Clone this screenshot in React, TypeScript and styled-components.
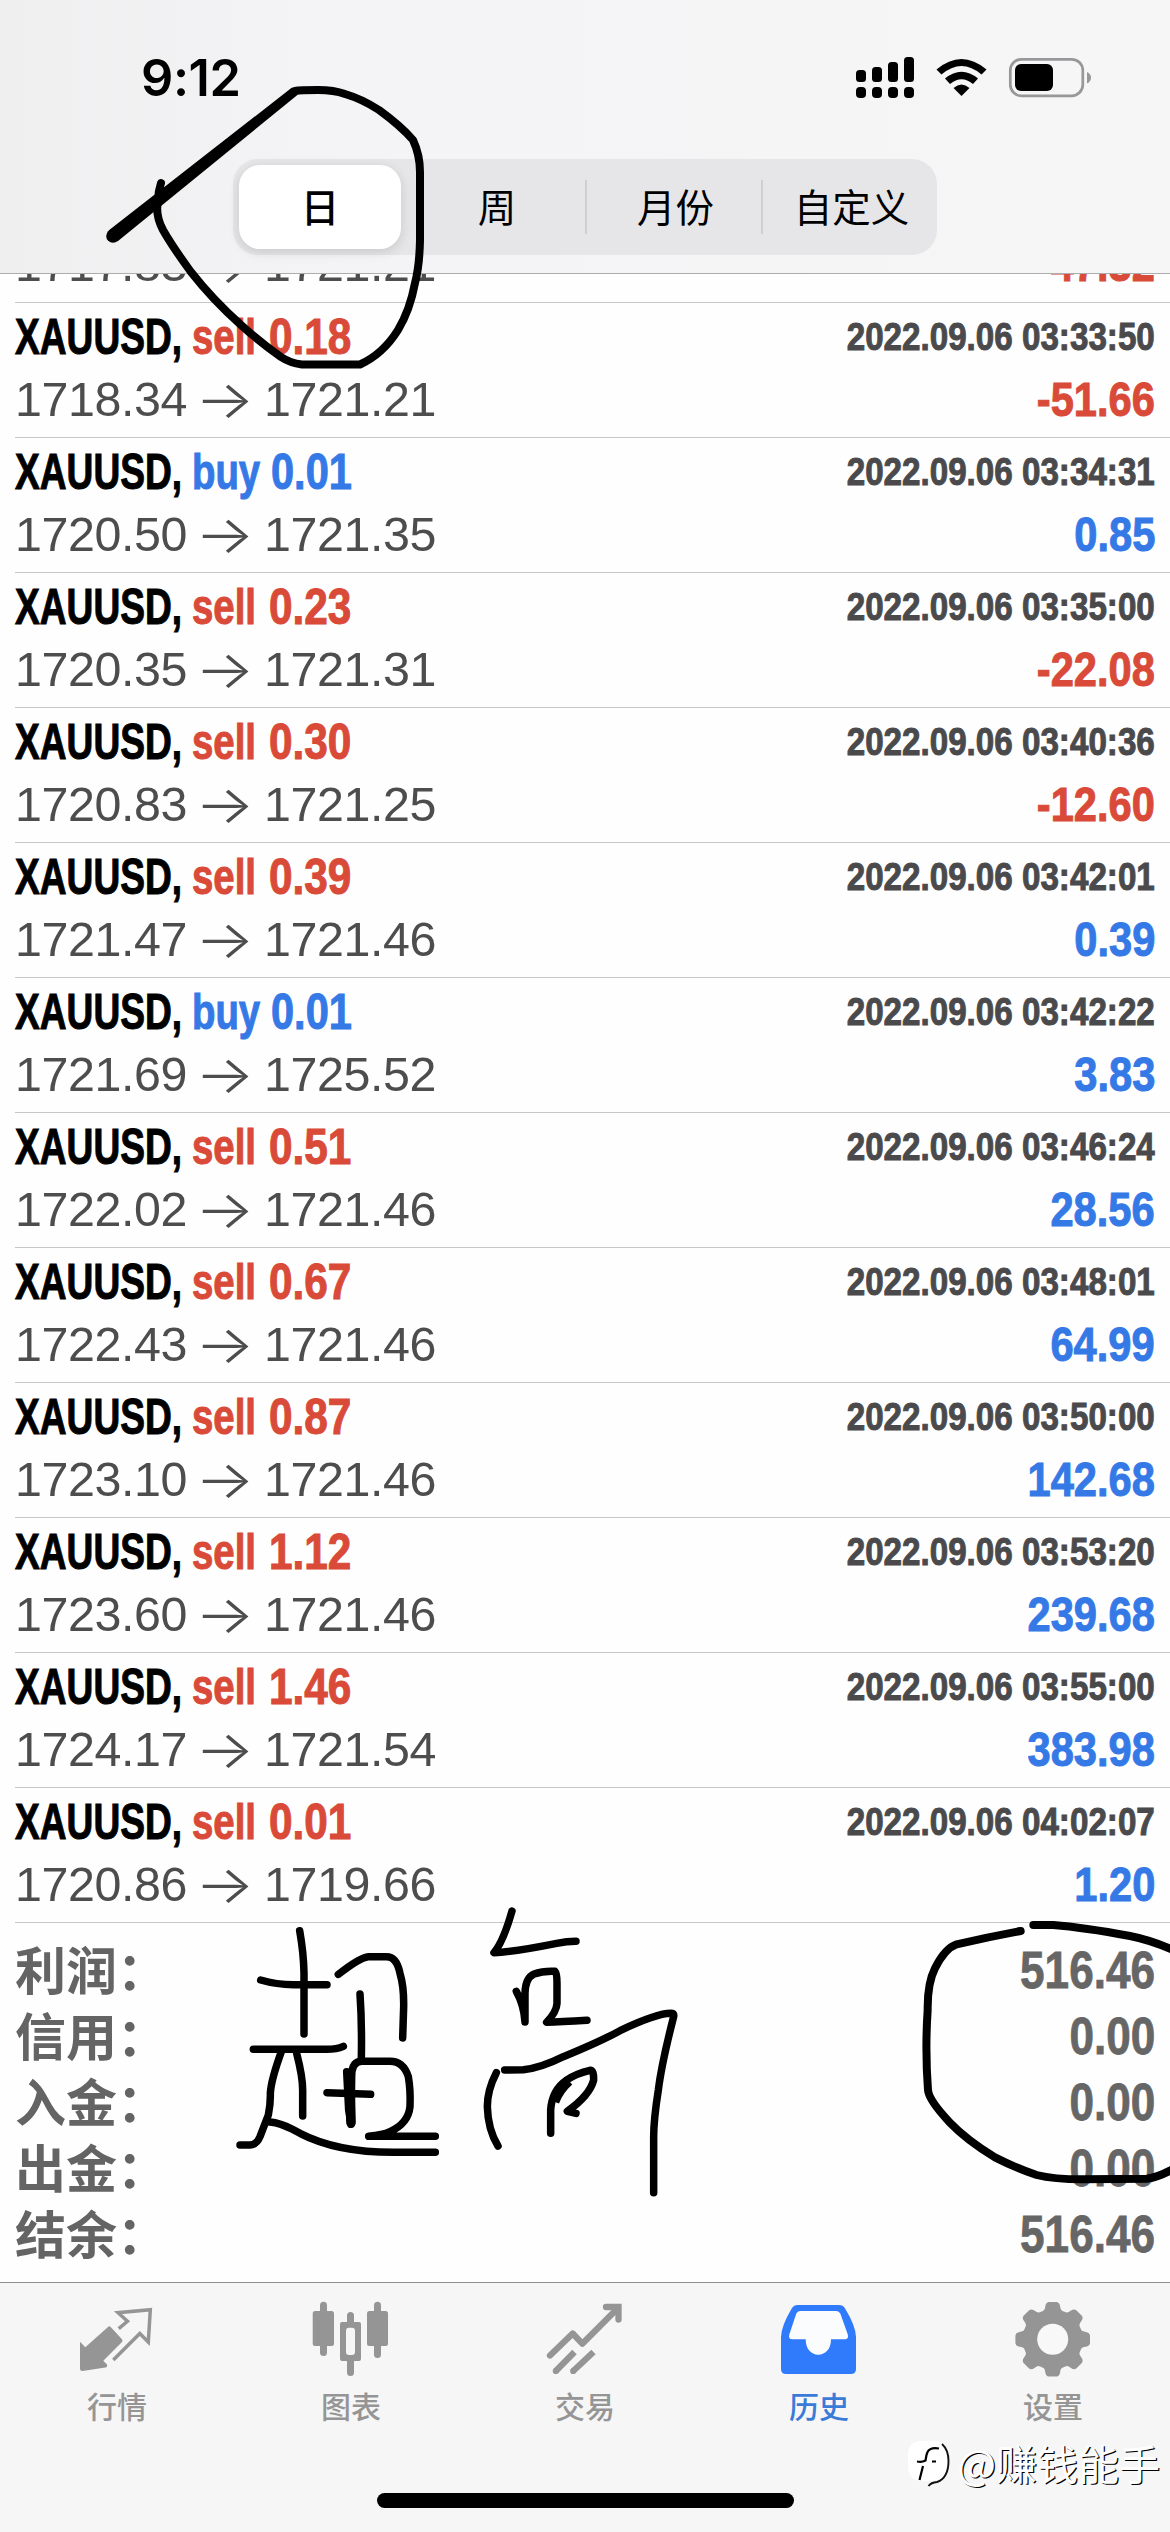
import React from "react";
import styled, { createGlobalStyle } from "styled-components";

const RED = "#d94a38";
const BLUE = "#3579e6";

const GlobalStyle = createGlobalStyle`
  * { box-sizing: border-box; }
  html, body { margin: 0; padding: 0; background: #fff; }
  body { font-family: "Liberation Sans", "Noto Sans CJK SC", sans-serif; }
`;

const Screen = styled.div`
  position: relative;
  display: flex;
  flex-direction: column;
  width: 1170px;
  height: 2532px;
  overflow: hidden;
  background: #fefefe;
`;

const Header = styled.header`
  flex: none;
  height: 274px;
  border-bottom: 1px solid #adadaf;
  background: linear-gradient(90deg, #efeff0 0%, #f4f4f6 30%, #f6f6f6 100%);
`;

const StatusBar = styled.div`
  display: flex;
  align-items: center;
  justify-content: space-between;
  height: 156px;
  margin-bottom: 3px;
  padding: 0 78px 0 141px;
`;

const Clock = styled.time`
  font-family: Inter, sans-serif;
  font-size: 50.5px;
  font-weight: 600;
  line-height: 60px;
  letter-spacing: -0.4px;
  color: #000;
`;

const StatusIcons = styled.svg`
  display: block;
  width: 236px;
  height: 44px;
`;

const Segmented = styled.nav`
  display: grid;
  grid-template-columns: repeat(4, 1fr);
  width: 704px;
  height: 96px;
  margin: 0 auto;
  padding: 6px 0;
  border-radius: 25px;
  background: #e6e6e8;
`;

const Segment = styled.button<{ $active?: boolean; $divider?: boolean }>`
  position: relative;
  display: flex;
  align-items: center;
  justify-content: center;
  margin: ${(p) => (p.$active ? "0 8px 0 6px" : "0")};
  padding: ${(p) => (p.$divider ? "0 0 5px 5px" : "0 0 5px")};
  border: 0;
  border-radius: 21px;
  background: ${(p) => (p.$active ? "#fff" : "transparent")};
  box-shadow: ${(p) => (p.$active ? "0 3px 12px rgba(0,0,0,.13)" : "none")};
  color: #000;
  font-family: "Noto Sans CJK SC", sans-serif;
  font-size: 38.5px;
  font-weight: ${(p) => (p.$active ? 500 : 400)};
  line-height: 56px;
  &::before {
    content: "";
    display: ${(p) => (p.$divider ? "block" : "none")};
    position: absolute;
    left: 0;
    top: 15px;
    width: 2px;
    height: 54px;
    background: #cfcfd1;
  }
`;

const History = styled.main`
  flex: none;
  height: 1649px;
  overflow: hidden;
  background: #fefefe;
`;

const Deals = styled.ul`
  margin: -41px 0 0 15px;
  padding: 0;
  list-style: none;
`;

const Deal = styled.li<{ $partial?: boolean }>`
  height: ${(p) => (p.$partial ? 70 : 135)}px;
  padding: ${(p) => (p.$partial ? 0 : 2)}px 15px 0 0;
  border-bottom: 1px solid #c6c8c8;
`;

const Line = styled.div`
  display: flex;
  height: 63px;
  line-height: 63px;
  white-space: pre;
`;

const Condensed = styled.span<{ $size: number; $scale: number; $width?: number; $color: string; $right?: boolean }>`
  display: block;
  flex: none;
  width: ${(p) => (p.$width ? `${p.$width}px` : "auto")};
  margin-left: ${(p) => (p.$right ? "auto" : "0")};
  transform: scaleX(${(p) => p.$scale});
  transform-origin: ${(p) => (p.$right ? "right" : "left")} center;
  font-size: ${(p) => p.$size}px;
  font-weight: 700;
  color: ${(p) => p.$color};
  -webkit-text-stroke: 1px ${(p) => p.$color};
`;

const Price = styled.span<{ $width: number }>`
  flex: none;
  width: ${(p) => p.$width}px;
  font-size: 48.4px;
  letter-spacing: -0.4px;
  color: #4d4d4d;
`;

const Arrow = styled.span`
  flex: none;
  width: 69px;
  transform: scaleX(1.2);
  transform-origin: left center;
  font-family: Inter, sans-serif;
  font-size: 52px;
  font-weight: 300;
  color: #4d4d4d;
`;

const Summary = styled.dl`
  display: flex;
  flex: none;
  flex-direction: column;
  height: 359px;
  margin: 0;
  padding: 15px 15px 0;
`;

const Total = styled.div`
  display: flex;
  align-items: center;
  height: 66px;
  line-height: 66px;
`;

const TotalLabel = styled.dt`
  margin-top: -7px;
  font-family: "Noto Sans CJK SC", sans-serif;
  font-size: 51px;
  font-weight: 600;
  color: #646464;
`;

const TotalValue = styled.dd`
  margin: 0 0 0 auto;
  transform: scaleX(0.865);
  transform-origin: right center;
  font-size: 51px;
  font-weight: 700;
  color: #666;
  -webkit-text-stroke: 0.8px #666;
`;

const TabBar = styled.footer`
  flex: none;
  height: 250px;
  border-top: 1px solid #8e8e8e;
  background: #f6f6f6;
`;

const Tabs = styled.nav`
  display: grid;
  grid-template-columns: repeat(5, 1fr);
  height: 210px;
  padding-top: 17px;
`;

const Tab = styled.a<{ $active?: boolean }>`
  display: flex;
  flex-direction: column;
  align-items: center;
  color: ${(p) => (p.$active ? "#2f7bfb" : "#959595")};
`;

const TabIcon = styled.svg`
  display: block;
  width: 80px;
  height: 80px;
  overflow: visible;
`;

const TabLabel = styled.span<{ $active?: boolean }>`
  margin-top: 5px;
  color: ${(p) => (p.$active ? "#3a7bd8" : "#959595")};
  font-family: "Noto Sans CJK SC", sans-serif;
  font-size: 30px;
  font-weight: 500;
  line-height: 40px;
`;

const HomeIndicator = styled.div`
  width: 417px;
  height: 15px;
  margin: 0 auto;
  border-radius: 8px;
  background: #000;
`;

const Watermark = styled.div`
  position: absolute;
  right: 10px;
  bottom: 41px;
  display: flex;
  align-items: center;
  gap: 5px;
  color: #fff;
  font-family: "Noto Sans CJK SC", sans-serif;
  font-size: 41px;
  line-height: 58px;
  text-shadow: 1.3px 1.3px 0 #000;
`;

const WatermarkLogo = styled.svg`
  display: block;
  width: 46px;
  height: 50px;
  margin-top: 3px;
`;

const Ink = styled.svg`
  position: absolute;
  inset: 0;
  width: 1170px;
  height: 2532px;
  pointer-events: none;
`;

interface DealData {
  side: "buy" | "sell";
  volume: string;
  open: string;
  close: string;
  time: string;
  profit: string;
}

const scrolledDeal = { open: "1717.83", close: "1721.21", profit: "-47.32" };

const deals: DealData[] = [
  { side: "sell", volume: "0.18", open: "1718.34", close: "1721.21", time: "2022.09.06 03:33:50", profit: "-51.66" },
  { side: "buy", volume: "0.01", open: "1720.50", close: "1721.35", time: "2022.09.06 03:34:31", profit: "0.85" },
  { side: "sell", volume: "0.23", open: "1720.35", close: "1721.31", time: "2022.09.06 03:35:00", profit: "-22.08" },
  { side: "sell", volume: "0.30", open: "1720.83", close: "1721.25", time: "2022.09.06 03:40:36", profit: "-12.60" },
  { side: "sell", volume: "0.39", open: "1721.47", close: "1721.46", time: "2022.09.06 03:42:01", profit: "0.39" },
  { side: "buy", volume: "0.01", open: "1721.69", close: "1725.52", time: "2022.09.06 03:42:22", profit: "3.83" },
  { side: "sell", volume: "0.51", open: "1722.02", close: "1721.46", time: "2022.09.06 03:46:24", profit: "28.56" },
  { side: "sell", volume: "0.67", open: "1722.43", close: "1721.46", time: "2022.09.06 03:48:01", profit: "64.99" },
  { side: "sell", volume: "0.87", open: "1723.10", close: "1721.46", time: "2022.09.06 03:50:00", profit: "142.68" },
  { side: "sell", volume: "1.12", open: "1723.60", close: "1721.46", time: "2022.09.06 03:53:20", profit: "239.68" },
  { side: "sell", volume: "1.46", open: "1724.17", close: "1721.54", time: "2022.09.06 03:55:00", profit: "383.98" },
  { side: "sell", volume: "0.01", open: "1720.86", close: "1719.66", time: "2022.09.06 04:02:07", profit: "1.20" },
];

const totals: [string, string][] = [
  ["利润：", "516.46"],
  ["信用：", "0.00"],
  ["入金：", "0.00"],
  ["出金：", "0.00"],
  ["结余：", "516.46"],
];

function PriceLine({ open, close, profit }: { open: string; close: string; profit: string }) {
  return (
    <Line>
      <Price $width={180}>{open}</Price>
      <Arrow>→</Arrow>
      <Price $width={180}>{close}</Price>
      <Condensed $size={49} $scale={0.85} $color={profit.startsWith("-") ? RED : BLUE} $right>
        {profit}
      </Condensed>
    </Line>
  );
}

function DealRow({ deal }: { deal: DealData }) {
  const sideColor = deal.side === "buy" ? BLUE : RED;
  return (
    <Deal>
      <Line>
        <Condensed $size={49.5} $scale={0.75} $width={177} $color="#000">XAUUSD,</Condensed>
        <Condensed $size={49.5} $scale={0.775} $width={deal.side === "buy" ? 79 : 77} $color={sideColor}>
          {deal.side}
        </Condensed>
        <Condensed $size={49.5} $scale={deal.side === "buy" ? 0.84 : 0.855} $color={sideColor}>{deal.volume}</Condensed>
        <Condensed $size={39.5} $scale={0.84} $color="#4a4a4c" $right>{deal.time}</Condensed>
      </Line>
      <PriceLine open={deal.open} close={deal.close} profit={deal.profit} />
    </Deal>
  );
}

function StatusGlyphs() {
  const tops = [70, 67, 62, 57];
  return (
    <StatusIcons viewBox="856 56 236 44">
      {tops.map((y, i) => (
        <React.Fragment key={y}>
          <rect x={856 + i * 16} y={y} width="10" height={82 - y} rx="3.5" />
          <rect x={856 + i * 16} y="87" width="10" height="11" rx="4" />
        </React.Fragment>
      ))}
      <path d="M936.5 69.5Q961.5 48.5 986.5 69.5L981.5 74.5Q961.5 57.5 941.5 74.5Z" />
      <path d="M945 78.5Q961.5 65 978 78.5L973 84Q961.5 74.5 950 84Z" />
      <path d="M953.5 88Q961.5 81 969.5 88L961.5 96Z" />
      <rect x="1010.3" y="59.3" width="72.5" height="36.5" rx="11" fill="none" stroke="#98989a" strokeWidth="2.7" />
      <rect x="1015" y="64" width="38" height="27" rx="6" />
      <path d="M1087 72Q1091 74 1091 77.5Q1091 81.5 1087 83.5Z" fill="#98989a" />
    </StatusIcons>
  );
}

function gearPath(cx: number, cy: number) {
  const pt = (deg: number, r: number) => {
    const a = ((deg - 90) * Math.PI) / 180;
    return `${(cx + r * Math.cos(a)).toFixed(2)} ${(cy + r * Math.sin(a)).toFixed(2)}`;
  };
  let d = "";
  for (let i = 0; i < 8; i++) {
    const a = i * 45;
    d += `${i ? "L" : "M"}${pt(a - 19, 30)}Q${pt(a - 15, 30)} ${pt(a - 12.5, 34)}Q${pt(a - 10.5, 37.5)} ${pt(a - 6, 37.5)}`;
    d += `L${pt(a + 6, 37.5)}Q${pt(a + 10.5, 37.5)} ${pt(a + 12.5, 34)}Q${pt(a + 15, 30)} ${pt(a + 19, 30)}`;
  }
  return `${d}Z`;
}

const QuotesIcon = () => (
  <TabIcon viewBox="77 2300 80 80">
    <path
      d="M80 2341.7L85.3 2347.3L108 2327Q109.3 2325.5 110.7 2327L122 2339.3Q123 2340.7 122 2342L103.3 2360.7L107 2364.5Q107.5 2367.3 105.5 2367.5L82.5 2371Q80 2371 80 2368.5Z"
      fill="currentColor"
    />
    <path
      d="M118.7 2328.7L127.5 2321.3L118 2312.7L150.3 2309.8L148.3 2342L139.8 2333.5L113.3 2360"
      fill="none" stroke="currentColor" strokeWidth="3.5"
    />
  </TabIcon>
);

const ChartIcon = () => (
  <TabIcon viewBox="311 2300 80 80" fill="currentColor">
    <rect x="312.7" y="2311" width="21.3" height="35" rx="2.5" />
    <rect x="320" y="2301.7" width="7" height="54.3" rx="3.5" />
    <rect x="347" y="2312" width="7" height="15" rx="3.5" />
    <rect x="347" y="2357" width="7" height="19" rx="3.5" />
    <path fillRule="evenodd" d="M342 2322H359Q361 2322 361 2324V2359Q361 2361 359 2361H342Q340 2361 340 2359V2324Q340 2322 342 2322ZM349 2327.7Q346 2327.7 346 2331V2352Q346 2355 349 2355H352Q355 2355 355 2352V2331Q355 2327.7 352 2327.7Z" />
    <rect x="367" y="2311" width="21" height="35" rx="2.5" />
    <rect x="374" y="2301.7" width="7" height="56.3" rx="3.5" />
  </TabIcon>
);

const TradeIcon = () => (
  <TabIcon viewBox="545 2300 80 80" fill="none" stroke="currentColor" strokeWidth="6.3">
    <path d="M550 2355.5L572.7 2333.5L582.3 2343.7L618 2308" strokeLinejoin="round" strokeLinecap="round" />
    <path d="M606 2307H618.5V2319.5" strokeLinecap="round" />
    <path d="M555.8 2371L574.5 2352M573.2 2371L593.5 2352" />
    <circle cx="555.8" cy="2371" r="3.1" fill="currentColor" stroke="none" />
    <circle cx="573.2" cy="2371" r="3.1" fill="currentColor" stroke="none" />
  </TabIcon>
);

const TRAY_OPENING =
  "M800 2311Q797.5 2311 796.3 2313.5L789.3 2334.5Q788.3 2339.3 792 2339.3H805.7C805.7 2349 811 2354.7 818.3 2354.7S831 2349 831 2339.3H845Q848.8 2339.3 847.8 2334.5L840.3 2313.5Q839 2311 836.5 2311Z";

const HistoryIcon = () => (
  <TabIcon viewBox="779 2300 80 80" fill="currentColor">
    <path d="M797 2305H839Q843 2305 844.8 2308Q855.8 2326 856 2337V2369Q856 2374 851 2374H786Q781 2374 781 2369V2337Q781.2 2326 792 2308Q793.8 2305 797 2305Z" />
    <path d={TRAY_OPENING} fill="#fafcfd" />
  </TabIcon>
);

const SettingsIcon = () => (
  <TabIcon viewBox="1013 2300 80 80">
    <path d={gearPath(1052.7, 2339.3)} fill="currentColor" />
    <circle cx="1052.7" cy="2339.3" r="15.5" fill="#f8f8f8" />
  </TabIcon>
);

const tabs = [
  { label: "行情", Icon: QuotesIcon },
  { label: "图表", Icon: ChartIcon },
  { label: "交易", Icon: TradeIcon },
  { label: "历史", Icon: HistoryIcon, active: true },
  { label: "设置", Icon: SettingsIcon },
];

function HandDrawnNotes() {
  return (
    <Ink viewBox="0 0 1170 2532" fill="none" stroke="#000" strokeLinecap="round" strokeLinejoin="round">
      <path strokeWidth="8" d="M295 91Q300 90 318 90Q334 90 345 94Q362 99 379 110Q401 126 413 140Q420 155 420 172V240Q419.5 266 415 283Q410 310 398 330Q383 354 360 364.5H302Q290 363 281 357Q261 343 241 325Q213 300 191 272Q172 246 163 230Q155 215 158 201Q158 192 161 183" />
      <path d="M108.6 230.5L117.4 241.5L298 94.5L292 87.5Z" fill="#000" stroke="none" />
      <circle cx="113" cy="236" r="6.8" fill="#000" stroke="none" />
      <g transform="translate(200 1890) scale(.33333)" strokeWidth="22.5">
        <path d="M299 122Q311 190 312 250V432" />
        <path d="M182 270Q230 284 280 284H381" />
        <path d="M415 253Q480 202 505 200H560Q590 200 600 250Q612 290 611 350L608 444" />
        <path d="M480 312Q486 400 484 505" />
        <path d="M160 478H380Q410 478 430 469" />
        <path d="M245 482Q213 570 211 610Q212 640 205 675L180 740Q170 764 150 765H120" />
        <path d="M290 490Q308 560 308 600V678" />
        <path d="M208 696Q240 696 300 730Q410 787 580 787H706" />
        <path d="M381 608L512 613" />
        <path d="M440 545L446 660L453 703L455 560Q455 514 485 514H570Q610 514 625 560Q632 600 630 650Q625 700 570 725Q550 735 506 739H706" />
        <path d="M450 590L453 698" strokeWidth="29" />
        <path d="M936 63Q910 155 882 188Q940 186 1070 160Q1100 154 1128 154" />
        <path d="M949 304Q972 345 975 396V310Q976 265 1000 253Q1030 242 1065 244Q1071 250 1071 280V340Q1070 365 1040 397Q1080 396 1161 391" />
        <path d="M914 540L970 539Q1020 535 1090 500Q1200 455 1260 422Q1370 370 1412 370Q1425 368 1420 384Q1385 520 1375 600Q1361 690 1361 740V908" />
        <path d="M889 548Q862 600 862 650Q864 720 894 768" />
        <path d="M1052 730V660Q1056 600 1100 570Q1130 550 1170 541Q1182 540 1181 570Q1170 615 1102 664L1128 670" />
        <path d="M1062 635Q1075 600 1106 572" strokeWidth="32" strokeLinecap="butt" />
      </g>
      <g transform="translate(870 1900) scale(.33333)" strokeWidth="24">
        <path d="M452 93Q360 110 260 133Q225 145 195 205Q172 250 173 330Q165 450 174 570Q176 600 240 668Q290 720 375 772Q440 805 500 825Q550 838 640 838L830 836Q860 833 900 812L930 795" />
        <path d="M490 75H550Q640 82 780 108Q850 122 920 155" />
      </g>
    </Ink>
  );
}

export default function App() {
  return (
    <Screen>
      <GlobalStyle />
      <Header>
        <StatusBar>
          <Clock>9:12</Clock>
          <StatusGlyphs />
        </StatusBar>
        <Segmented>
          <Segment $active>日</Segment>
          <Segment>周</Segment>
          <Segment $divider>月份</Segment>
          <Segment $divider>自定义</Segment>
        </Segmented>
      </Header>
      <History>
        <Deals>
          <Deal $partial>
            <PriceLine {...scrolledDeal} />
          </Deal>
          {deals.map((deal) => (
            <DealRow key={deal.time} deal={deal} />
          ))}
        </Deals>
      </History>
      <Summary>
        {totals.map(([label, value]) => (
          <Total key={label}>
            <TotalLabel>{label}</TotalLabel>
            <TotalValue>{value}</TotalValue>
          </Total>
        ))}
      </Summary>
      <TabBar>
        <Tabs>
          {tabs.map(({ label, Icon, active }) => (
            <Tab key={label} $active={active}>
              <Icon />
              <TabLabel $active={active}>{label}</TabLabel>
            </Tab>
          ))}
        </Tabs>
        <HomeIndicator />
      </TabBar>
      <Watermark>
        <WatermarkLogo viewBox="907 2445 46 50">
          <path d="M924 2446.7H934Q949 2446.7 949 2461V2472Q949 2487 934 2487H924Q909 2487 909 2472V2461Q909 2446.7 924 2446.7Z" fill="#fff" />
          <path d="M943 2450Q949.5 2456 949.5 2467Q949.5 2484 938 2488Q932 2488.5 929.5 2492" fill="none" stroke="#111" strokeWidth="1.9" />
          <path d="M940 2454.5Q929 2452.5 927.5 2461L926.5 2466.5Q923 2468.5 918 2467.5M924 2472L920.5 2486M933 2467.5H937" fill="none" stroke="#000" strokeWidth="2.2" />
        </WatermarkLogo>
        <span>@赚钱能手</span>
      </Watermark>
      <HandDrawnNotes />
    </Screen>
  );
}
